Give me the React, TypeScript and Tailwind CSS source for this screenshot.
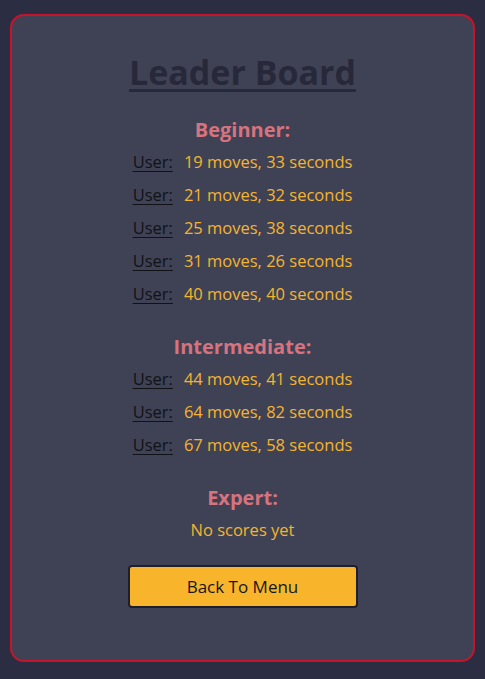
import React from 'react'

interface Section {
  title: string
  scores: string[]
}

const sections: Section[] = [
  { title: 'Beginner:', scores: ['19 moves, 33 seconds', '21 moves, 32 seconds', '25 moves, 38 seconds', '31 moves, 26 seconds', '40 moves, 40 seconds'] },
  { title: 'Intermediate:', scores: ['44 moves, 41 seconds', '64 moves, 82 seconds', '67 moves, 58 seconds'] },
  { title: 'Expert:', scores: [] },
]

export default function App() {
  return (
    <div className="min-h-[679px] bg-[#2b2d42] pt-[14px] px-[10px] font-['Open_Sans',sans-serif]">
      <div className="h-[648px] rounded-[14px] border-2 border-[#c8142a] bg-[#3f4254] flex flex-col items-center pt-[32px]">
        <h1 className="text-[34px] leading-[48px] font-bold text-[#27283a] underline decoration-[3px] underline-offset-[4px]">
          Leader Board
        </h1>
        {sections.map((s, idx) => (
          <div key={s.title} className={idx === 0 ? 'flex flex-col items-center mt-[19px]' : 'flex flex-col items-center mt-[22px]'}>
            <h2 className="text-[20px] leading-[30px] font-bold text-[#d6737e]">{s.title}</h2>
            {s.scores.length === 0 ? (
              <p className="text-[16.5px] leading-[33px] text-[#f5b42f]">No scores yet</p>
            ) : (
              s.scores.map((sc, i) => (
                <div key={i} className="flex gap-[11px] text-[16.5px] leading-[33px]">
                  <span className="text-[#111218] underline underline-offset-[3px]">User:</span>
                  <span className="text-[#f5b42f]">{sc}</span>
                </div>
              ))
            )}
          </div>
        ))}
        <button className="mt-[19px] w-[230px] h-[43px] rounded-[4px] border-2 border-[#1e1f2c] bg-[#f8b52c] text-[17px] text-[#15161f]">
          Back To Menu
        </button>
      </div>
    </div>
  )
}
